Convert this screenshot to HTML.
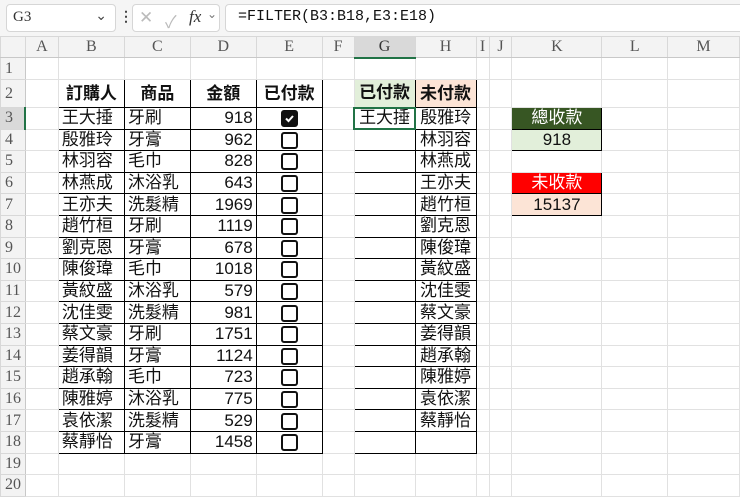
<!DOCTYPE html>
<html><head><meta charset="utf-8"><style>
body{margin:0;width:740px;height:499px;overflow:hidden;background:#fff;font-family:"Liberation Sans","Noto Sans CJK TC",sans-serif;position:relative}
#bar{position:absolute;left:0;top:0;width:740px;height:36px;background:#f5f5f5}
.box{position:absolute;background:#fff;border:1px solid #d6d6d6;border-radius:4px}
table{position:absolute;left:0;top:36px;border-collapse:collapse;table-layout:fixed}
td{border:1px solid #e1e1e1;padding:0 3px;font-size:17px;color:#111;white-space:nowrap;overflow:hidden;line-height:18px}
tr.h td{background:#f3f3f3;color:#555;font-family:"Liberation Serif",serif;font-size:16px;text-align:center;border-color:#d8d8d8;border-bottom:1px solid #c8c8c8}
td.rh{background:#f3f3f3;color:#555;font-family:"Liberation Serif",serif;font-size:16px;text-align:left;padding-left:4px;border-color:#d8d8d8;border-right:1px solid #c8c8c8}
.b{border:1px solid #000}
.bold{font-weight:bold;text-align:center}
.r{text-align:right}
.c{text-align:center}
.cb{display:inline-block;width:13px;height:13px;border:2px solid #111;border-radius:3px;vertical-align:middle}
.ck{background:#111;position:relative}
</style></head><body>
<div id="bar">
<div class="box" style="left:6px;top:4px;width:108px;height:26px"><span style="position:absolute;left:6px;top:4px;font-family:'Liberation Serif',serif;font-size:15px;color:#333">G3</span><span style="position:absolute;right:8px;top:2px;font-size:14px;color:#444">⌄</span></div>
<div style="position:absolute;left:119px;top:8px;font-size:14px;color:#444;font-weight:bold">⋮</div>
<div class="box" style="left:132px;top:4px;width:86px;height:26px"><span style="position:absolute;left:6px;top:3px;font-size:17px;color:#bbb">✕</span><span style="position:absolute;left:32px;top:3px;font-size:17px;color:#bbb">✓</span><span style="position:absolute;left:56px;top:2px;font-family:'Liberation Serif',serif;font-style:italic;font-size:17px;color:#333">fx</span><span style="position:absolute;left:74px;top:2px;font-size:12px;color:#777">⌄</span></div>
<div class="box" style="left:225px;top:4px;width:530px;height:26px"><span style="position:absolute;left:12px;top:3px;font-family:'Liberation Mono',monospace;font-size:15px;color:#111">=FILTER(B3:B18,E3:E18)</span></div>
</div>
<table>
<colgroup><col style="width:25px"><col style="width:33px"><col style="width:66px"><col style="width:66px"><col style="width:66px"><col style="width:66px"><col style="width:32px"><col style="width:61px"><col style="width:61px"><col style="width:13px"><col style="width:23px"><col style="width:90px"><col style="width:66px"><col style="width:72px"></colgroup>
<tr class="h" style="height:21px"><td style="background:#f3f3f3"></td><td>A</td><td>B</td><td>C</td><td>D</td><td>E</td><td>F</td><td style="background:#d9d9d9;border-bottom:2px solid #217346;color:#333">G</td><td>H</td><td>I</td><td>J</td><td>K</td><td>L</td><td>M</td></tr>
<tr style="height:22px"><td class="rh">1</td><td></td><td></td><td></td><td></td><td></td><td></td><td></td><td></td><td></td><td></td><td></td><td></td><td></td></tr>
<tr style="height:28px"><td class="rh">2</td><td></td><td class="b bold">訂購人</td><td class="b bold">商品</td><td class="b bold">金額</td><td class="b bold">已付款</td><td></td><td class="b bold" style="background:#e2efda">已付款</td><td class="b bold" style="background:#fce4d6">未付款</td><td></td><td></td><td></td><td></td><td></td></tr>
<tr style="height:21.6px"><td class="rh" style="background:#d9d9d9;border-right:2px solid #217346">3</td><td></td><td class="b">王大捶</td><td class="b">牙刷</td><td class="b r">918</td><td class="b c"><span class="cb ck"><svg width="13" height="13" style="position:absolute;left:0;top:0"><path d="M3 6.5 L5.5 9 L10 4" stroke="#fff" stroke-width="2" fill="none"/></svg></span></td><td></td><td class="c" style="border:2px solid #217346">王大捶</td><td class="b c">殷雅玲</td><td></td><td></td><td class="b c" style="background:#375623;color:#fff">總收款</td><td></td><td></td></tr>
<tr style="height:21.6px"><td class="rh">4</td><td></td><td class="b">殷雅玲</td><td class="b">牙膏</td><td class="b r">962</td><td class="b c"><span class="cb"></span></td><td></td><td class="b"></td><td class="b c">林羽容</td><td></td><td></td><td class="b c" style="background:#e2efda">918</td><td></td><td></td></tr>
<tr style="height:21.6px"><td class="rh">5</td><td></td><td class="b">林羽容</td><td class="b">毛巾</td><td class="b r">828</td><td class="b c"><span class="cb"></span></td><td></td><td class="b"></td><td class="b c">林燕成</td><td></td><td></td><td></td><td></td><td></td></tr>
<tr style="height:21.6px"><td class="rh">6</td><td></td><td class="b">林燕成</td><td class="b">沐浴乳</td><td class="b r">643</td><td class="b c"><span class="cb"></span></td><td></td><td class="b"></td><td class="b c">王亦夫</td><td></td><td></td><td class="b c" style="background:#ff0000;color:#fff">未收款</td><td></td><td></td></tr>
<tr style="height:21.6px"><td class="rh">7</td><td></td><td class="b">王亦夫</td><td class="b">洗髮精</td><td class="b r">1969</td><td class="b c"><span class="cb"></span></td><td></td><td class="b"></td><td class="b c">趙竹桓</td><td></td><td></td><td class="b c" style="background:#fce4d6">15137</td><td></td><td></td></tr>
<tr style="height:21.6px"><td class="rh">8</td><td></td><td class="b">趙竹桓</td><td class="b">牙刷</td><td class="b r">1119</td><td class="b c"><span class="cb"></span></td><td></td><td class="b"></td><td class="b c">劉克恩</td><td></td><td></td><td></td><td></td><td></td></tr>
<tr style="height:21.6px"><td class="rh">9</td><td></td><td class="b">劉克恩</td><td class="b">牙膏</td><td class="b r">678</td><td class="b c"><span class="cb"></span></td><td></td><td class="b"></td><td class="b c">陳俊瑋</td><td></td><td></td><td></td><td></td><td></td></tr>
<tr style="height:21.6px"><td class="rh">10</td><td></td><td class="b">陳俊瑋</td><td class="b">毛巾</td><td class="b r">1018</td><td class="b c"><span class="cb"></span></td><td></td><td class="b"></td><td class="b c">黃紋盛</td><td></td><td></td><td></td><td></td><td></td></tr>
<tr style="height:21.6px"><td class="rh">11</td><td></td><td class="b">黃紋盛</td><td class="b">沐浴乳</td><td class="b r">579</td><td class="b c"><span class="cb"></span></td><td></td><td class="b"></td><td class="b c">沈佳雯</td><td></td><td></td><td></td><td></td><td></td></tr>
<tr style="height:21.6px"><td class="rh">12</td><td></td><td class="b">沈佳雯</td><td class="b">洗髮精</td><td class="b r">981</td><td class="b c"><span class="cb"></span></td><td></td><td class="b"></td><td class="b c">蔡文豪</td><td></td><td></td><td></td><td></td><td></td></tr>
<tr style="height:21.6px"><td class="rh">13</td><td></td><td class="b">蔡文豪</td><td class="b">牙刷</td><td class="b r">1751</td><td class="b c"><span class="cb"></span></td><td></td><td class="b"></td><td class="b c">姜得韻</td><td></td><td></td><td></td><td></td><td></td></tr>
<tr style="height:21.6px"><td class="rh">14</td><td></td><td class="b">姜得韻</td><td class="b">牙膏</td><td class="b r">1124</td><td class="b c"><span class="cb"></span></td><td></td><td class="b"></td><td class="b c">趙承翰</td><td></td><td></td><td></td><td></td><td></td></tr>
<tr style="height:21.6px"><td class="rh">15</td><td></td><td class="b">趙承翰</td><td class="b">毛巾</td><td class="b r">723</td><td class="b c"><span class="cb"></span></td><td></td><td class="b"></td><td class="b c">陳雅婷</td><td></td><td></td><td></td><td></td><td></td></tr>
<tr style="height:21.6px"><td class="rh">16</td><td></td><td class="b">陳雅婷</td><td class="b">沐浴乳</td><td class="b r">775</td><td class="b c"><span class="cb"></span></td><td></td><td class="b"></td><td class="b c">袁依潔</td><td></td><td></td><td></td><td></td><td></td></tr>
<tr style="height:21.6px"><td class="rh">17</td><td></td><td class="b">袁依潔</td><td class="b">洗髮精</td><td class="b r">529</td><td class="b c"><span class="cb"></span></td><td></td><td class="b"></td><td class="b c">蔡靜怡</td><td></td><td></td><td></td><td></td><td></td></tr>
<tr style="height:21.6px"><td class="rh">18</td><td></td><td class="b">蔡靜怡</td><td class="b">牙膏</td><td class="b r">1458</td><td class="b c"><span class="cb"></span></td><td></td><td class="b"></td><td class="b"></td><td></td><td></td><td></td><td></td><td></td></tr>
<tr style="height:21.6px"><td class="rh">19</td><td></td><td></td><td></td><td></td><td></td><td></td><td></td><td></td><td></td><td></td><td></td><td></td><td></td></tr>
<tr style="height:21.6px"><td class="rh">20</td><td></td><td></td><td></td><td></td><td></td><td></td><td></td><td></td><td></td><td></td><td></td><td></td><td></td></tr>
</table>
</body></html>
